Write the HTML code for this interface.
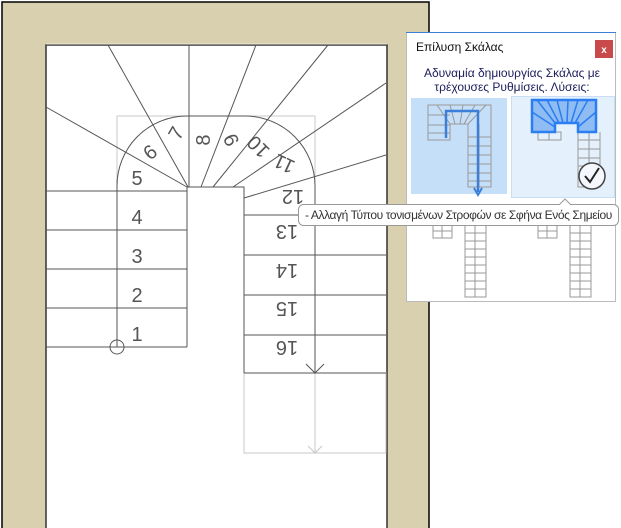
<!DOCTYPE html>
<html><head><meta charset="utf-8"><style>
body{margin:0;width:621px;height:528px;overflow:hidden;background:#fff;font-family:"Liberation Sans","DejaVu Sans",sans-serif}
svg{position:absolute;left:0;top:0}
</style></head><body>
<svg width="621" height="528" viewBox="0 0 621 528" font-family="Liberation Sans, DejaVu Sans, sans-serif">
<rect x="0" y="0" width="621" height="528" fill="#fff"/>
<rect x="2" y="2" width="427" height="530" fill="#d8d0ae" stroke="#000" stroke-width="1.5"/>
<rect x="46" y="45" width="341" height="490" fill="#fff" stroke="#333" stroke-width="1.5"/>
<line x1="46" y1="44" x2="387" y2="44" stroke="#eee8d8"/>
<g stroke="#c8c8c8" fill="none">
<path d="M117 191 V116 H315 V191"/>
<rect x="244" y="373" width="142" height="80"/>
<line x1="315" y1="373" x2="315" y2="453"/>
<path d="M308 446 L315 453 L322 446"/>
</g>
<g stroke="#555" fill="none" stroke-width="1">
<path d="M117 191 V186 A70 70 0 0 1 187 116 H245 A70 70 0 0 1 315 186 V191"/>
<line x1="46" y1="107" x2="187" y2="187"/>
<line x1="108" y1="45" x2="188" y2="187"/>
<line x1="189" y1="45" x2="189" y2="187"/>
<line x1="256" y1="45" x2="201" y2="187"/>
<line x1="328" y1="45" x2="213" y2="187"/>
<line x1="386" y1="83" x2="233" y2="187"/>
<line x1="386" y1="155" x2="244" y2="198"/>
<path d="M46 191 H187 M46 230 H187 M46 269 H187 M46 308 H187 M46 347 H187"/>
<line x1="117" y1="180" x2="117" y2="347"/>
<circle cx="117" cy="347" r="7"/>
<path d="M187 347 V187 H244 V373"/>
<path d="M244 215 H386 M244 255 H386 M244 295 H386 M244 335 H386 M244 373 H386"/>
<line x1="315" y1="191" x2="315" y2="373"/>
<path d="M306 364 L315 373 L324 364"/>
</g>
<g fill="#555" font-size="20" text-anchor="middle">
<text x="137" y="341">1</text>
<text x="137" y="302">2</text>
<text x="137" y="263">3</text>
<text x="137" y="224">4</text>
<text x="137" y="185">5</text>
<text transform="translate(150,152) rotate(-40)" y="7">6</text>
<text transform="translate(176,133) rotate(-60)" y="7">7</text>
<text transform="translate(203,140) rotate(-90)" y="7">8</text>
<text transform="translate(231,140) rotate(-115)" y="7">9</text>
<text transform="translate(258,147) rotate(-135)" y="7">10</text>
<text transform="translate(284,164) rotate(-155)" y="7">11</text>
<text transform="translate(293,197) rotate(180)" y="7">12</text>
<text transform="translate(287,232) rotate(180)" y="7">13</text>
<text transform="translate(287,271) rotate(180)" y="7">14</text>
<text transform="translate(287,309) rotate(180)" y="7">15</text>
<text transform="translate(287,348) rotate(180)" y="7">16</text>
</g>
<rect x="406.5" y="32.5" width="209" height="269" fill="#fff" stroke="#bbb"/>
<line x1="406" y1="32.5" x2="616" y2="32.5" stroke="#3c7fd8"/>
<text x="416" y="51" font-size="12" fill="#111">Επίλυση Σκάλας</text>
<rect x="595" y="40" width="18" height="18" fill="#c94a4a"/>
<text x="604" y="53" font-size="10" fill="#fff" text-anchor="middle" font-weight="bold">x</text>
<text x="512" y="77" font-size="12" fill="#1c1c5c" text-anchor="middle">Αδυναμία δημιουργίας Σκάλας με</text>
<text x="512" y="91" font-size="12" fill="#1c1c5c" text-anchor="middle">τρέχουσες Ρυθμίσεις. Λύσεις:</text>
<rect x="411" y="98" width="96" height="96" fill="#c6dff8"/>
<rect x="511.5" y="96.5" width="103" height="101" fill="#e4f0fc" stroke="#c9def4"/>
<g stroke="#999" fill="none">
<path d="M428 105 H491 V187 H468 V124 H450 V140 H428 Z"/>
<path d="M428 115 H450 M428 125 H450 M428 133 H450 M468 137 H491 M468 146 H491 M468 155 H491 M468 164 H491 M468 173 H491 M468 181 H491 M479 124 V187"/>
<path d="M437 105 L450 124 M450 105 L455 124 M463 105 L460 124 M475 105 L464 124 M486 105 L468 124"/>
<path d="M538 132 H561 V140 H538 Z M549 132 V140 M578 132 V187 H600 V132 M578 140 H600 M578 149 H600 M578 158 H600 M578 166 H600 M578 175 H600 M589 132 V187"/>
<path d="M433 225 H452 V238 H433 Z M433 231 H452 M442 225 V238 M465 225 V297 H486 V225 Z M465 233 H486 M465 241 H486 M465 249 H486 M465 257 H486 M465 265 H486 M465 273 H486 M465 281 H486 M465 289 H486 M475 225 V297"/>
<path d="M538 225 H557 V238 H538 Z M538 231 H557 M547 225 V238 M570 225 V297 H591 V225 Z M570 233 H591 M570 241 H591 M570 249 H591 M570 257 H591 M570 265 H591 M570 273 H591 M570 281 H591 M570 289 H591 M580 225 V297"/>
</g>
<path d="M433 225 H452 M538 225 H557" stroke="#3c7fd8" stroke-width="2"/>
<path d="M446 138 V111 H478 V192" stroke="#3c7fd8" stroke-width="2.5" fill="none"/>
<path d="M474 188 L478 195 L482 188" stroke="#3c7fd8" stroke-width="2" fill="none"/>
<path d="M532 100 H596 V132 H578 V123 H555 V132 H532 Z" fill="#8fbcf2" stroke="#2a7ef2" stroke-width="2.5"/>
<g stroke="#2a7ef2" stroke-width="1.5">
<path d="M537 100 L555 123 M547 100 L559 123 M557 100 L563 123 M568 100 L567 123 M578 100 L571 123 M588 100 L575 123 M532 112 L555 127 M596 112 L578 127"/>
</g>
<circle cx="592" cy="176" r="13" fill="#f4f8fc" stroke="#444" stroke-width="1.5"/>
<path d="M585 176 L590 182 L599 168" stroke="#222" stroke-width="2" fill="none"/>
<rect x="298.5" y="204.5" width="320" height="21" rx="5" fill="#fff" stroke="#999"/>
<path d="M559 205 L565 199 L571 205" fill="#fff" stroke="#999"/>
<rect x="558" y="205" width="14" height="1.5" fill="#fff"/>
<text x="305" y="219" font-size="12" fill="#333" letter-spacing="-0.4">- Αλλαγή Τύπου τονισμένων Στροφών σε Σφήνα Ενός Σημείου</text>
</svg>
</body></html>
